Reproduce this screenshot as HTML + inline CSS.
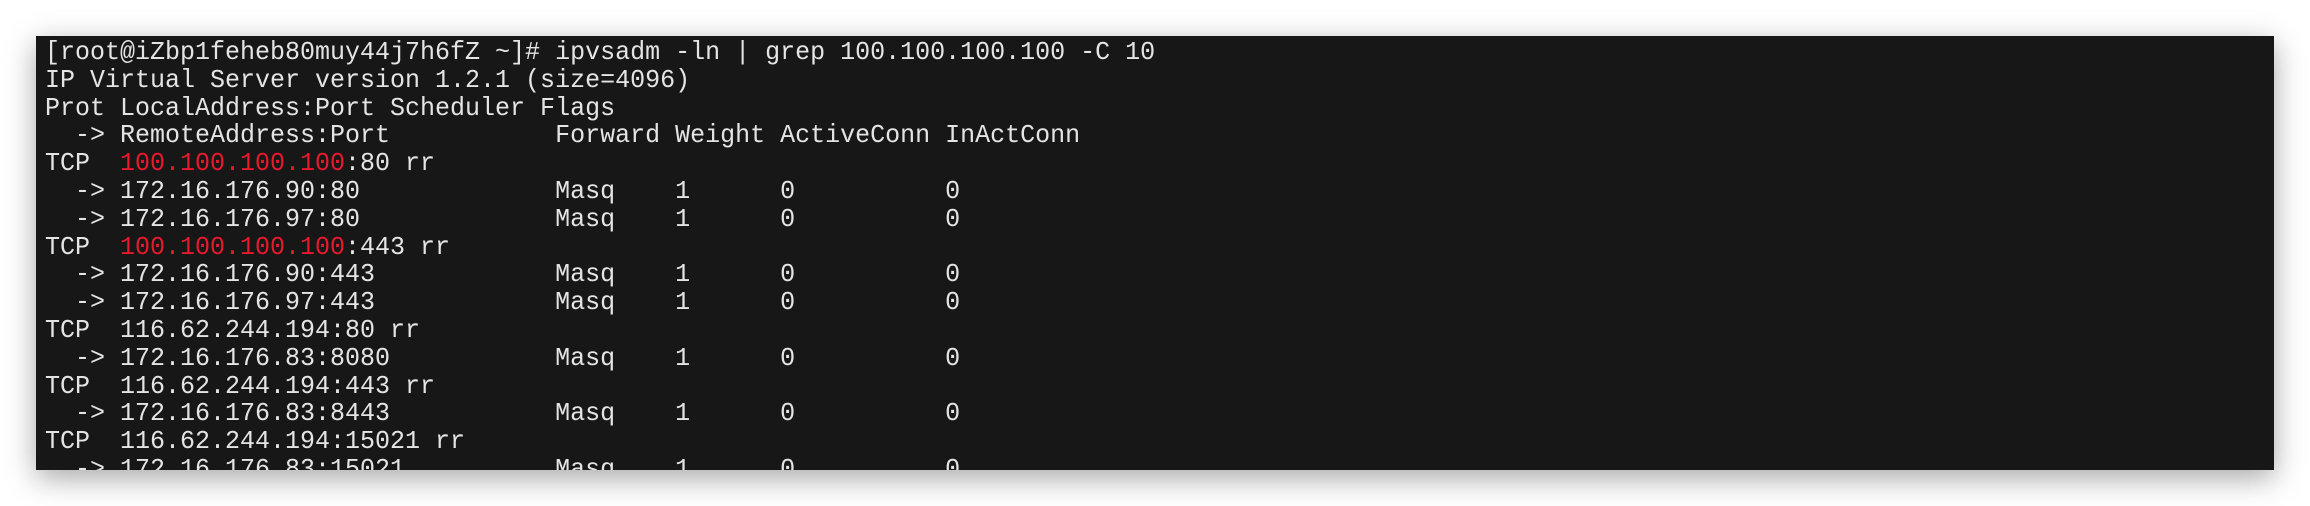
<!DOCTYPE html>
<html><head><meta charset="utf-8"><style>
html,body{margin:0;padding:0;background:#fff;width:2310px;height:506px;overflow:hidden}
.box{position:absolute;left:36px;top:36px;width:2238px;height:434px;background:#171717;overflow:hidden;box-shadow:0 8px 28px rgba(0,0,0,0.35)}
pre{margin:0;padding:3px 0 0 0;font-family:"Liberation Mono",monospace;font-size:26px;line-height:27.8px;color:#e4e4e4;transform-origin:0 0;transform:scaleX(0.9615);position:absolute;left:9px;top:0}
.r{color:#e8192c}
</style></head><body>
<div class="box"><pre>[root@iZbp1feheb80muy44j7h6fZ ~]# ipvsadm -ln | grep 100.100.100.100 -C 10
IP Virtual Server version 1.2.1 (size=4096)
Prot LocalAddress:Port Scheduler Flags
  -&gt; RemoteAddress:Port           Forward Weight ActiveConn InActConn
TCP  <span class="r">100.100.100.100</span>:80 rr
  -&gt; 172.16.176.90:80             Masq    1      0          0
  -&gt; 172.16.176.97:80             Masq    1      0          0
TCP  <span class="r">100.100.100.100</span>:443 rr
  -&gt; 172.16.176.90:443            Masq    1      0          0
  -&gt; 172.16.176.97:443            Masq    1      0          0
TCP  116.62.244.194:80 rr
  -&gt; 172.16.176.83:8080           Masq    1      0          0
TCP  116.62.244.194:443 rr
  -&gt; 172.16.176.83:8443           Masq    1      0          0
TCP  116.62.244.194:15021 rr
  -&gt; 172.16.176.83:15021          Masq    1      0          0
</pre></div>
</body></html>
